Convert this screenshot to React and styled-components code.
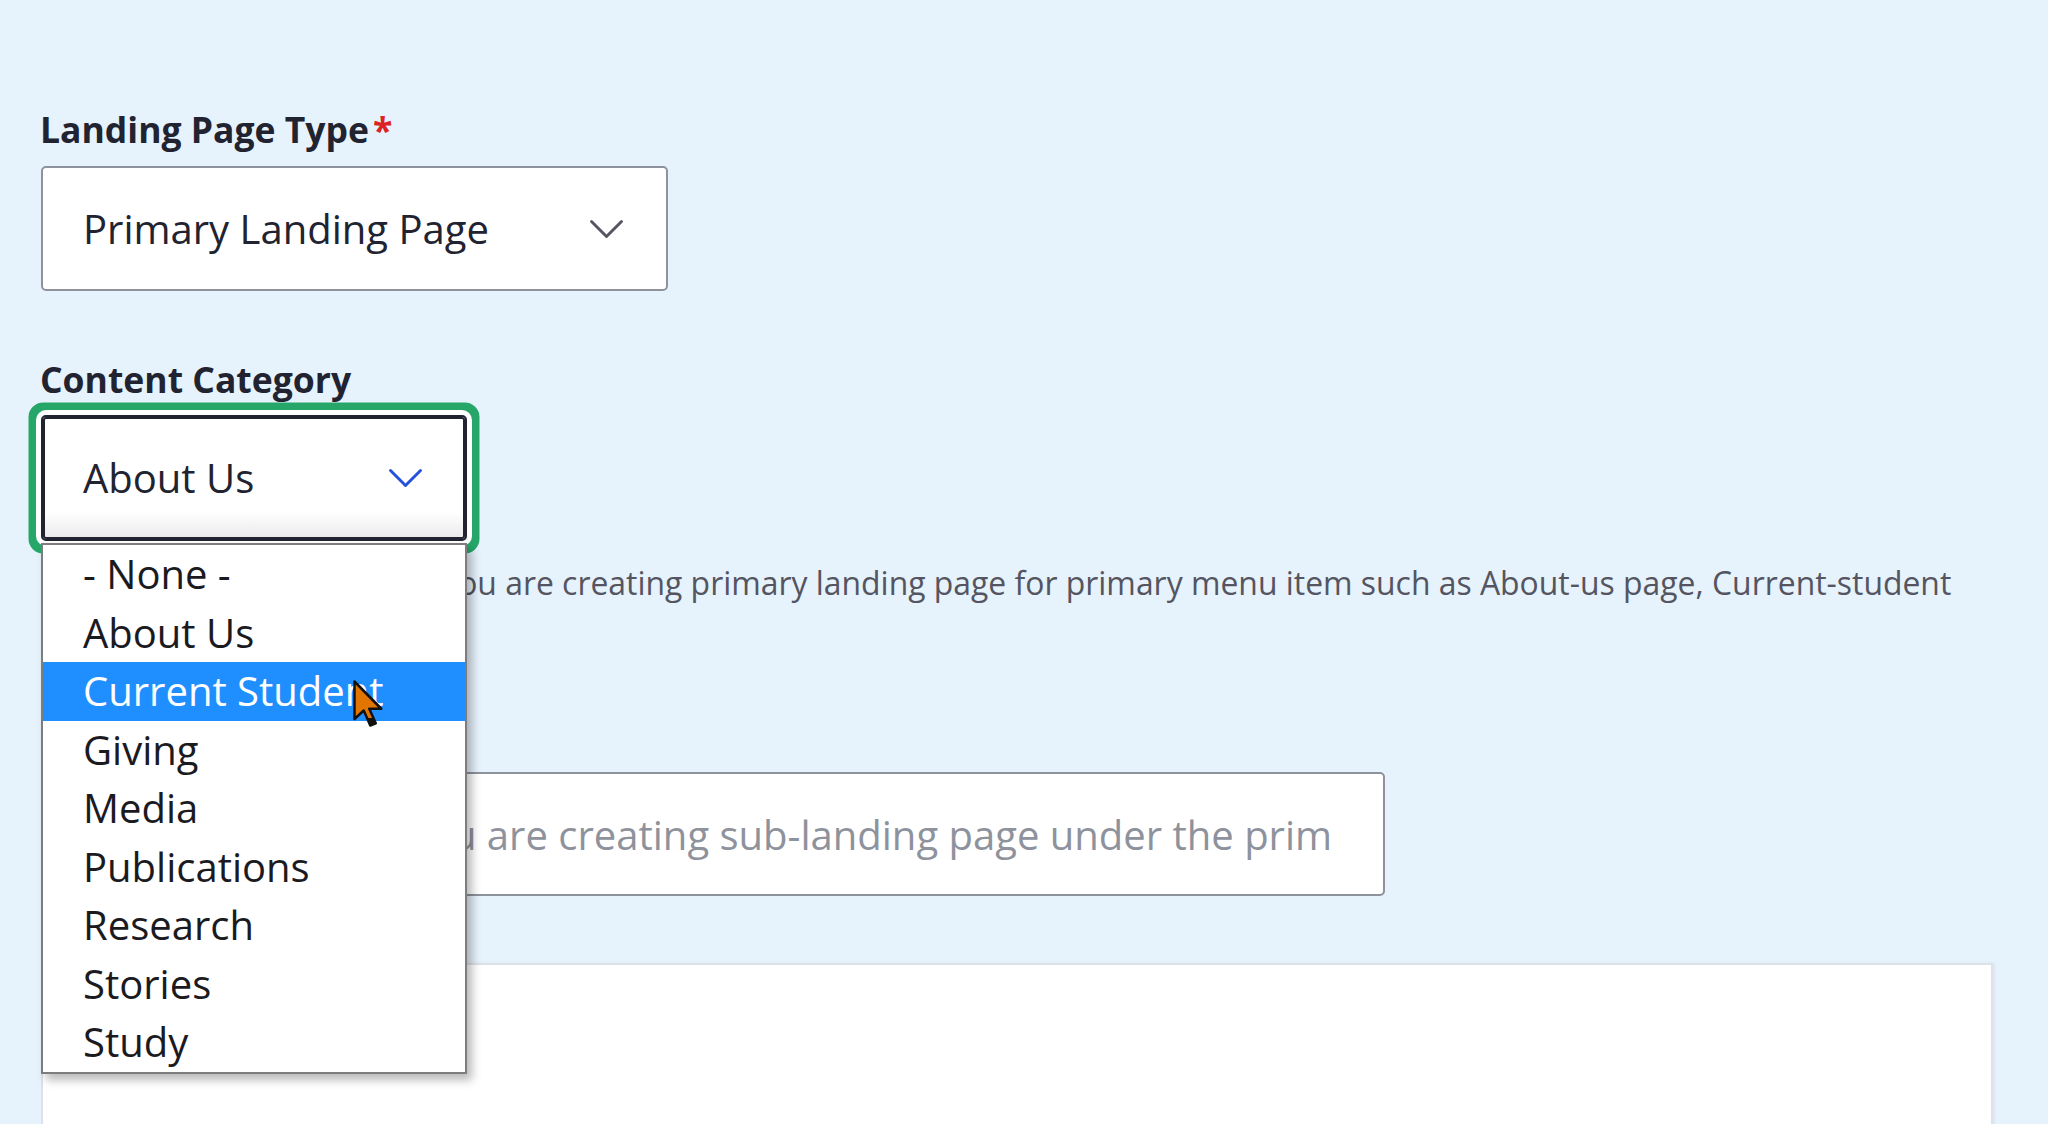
import React from 'react';
import styled, { createGlobalStyle } from 'styled-components';

const GlobalStyle = createGlobalStyle`
  html, body {
    margin: 0;
    padding: 0;
    background: #e6f2fc;
    overflow: hidden;
  }
  body {
    font-family: 'Open Sans', 'Noto Sans', sans-serif;
    color: #222330;
  }
`;

const Page = styled.main`
  box-sizing: border-box;
  height: 1124px;
  padding: 107px 0 0 41px;
  overflow: hidden;
`;

const FormItem = styled.div`
  position: relative;
  margin-top: ${(p) => p.$gap || 0}px;
`;

const Label = styled.label`
  display: block;
  margin: 0 0 ${(p) => p.$after || 14}px -1px;
  font-size: 35.5px;
  line-height: 45px;
  font-weight: 700;
  color: #222330;
`;

const Required = styled.span`
  margin-left: 4px;
  color: #dc2323;
`;

const SelectBox = styled.div`
  box-sizing: border-box;
  display: flex;
  align-items: center;
  justify-content: space-between;
  width: ${(p) => p.$width}px;
  height: ${(p) => p.$height || 125}px;
  padding: 0 42px 0 40px;
  border: 2px solid ${(p) => (p.$focused ? '#222330' : '#8e929c')};
  border-radius: 5px;
  background: ${(p) =>
    p.$focused ? 'linear-gradient(to bottom, #fff 78%, #e9e9ec 100%)' : '#fff'};
  box-shadow: ${(p) =>
    p.$focused
      ? 'inset 0 0 0 2px #222330, 0 0 0 5px #fff, 0 0 0 12.5px #26a769'
      : 'none'};
  font-size: 40px;
  line-height: 60px;
  color: #222330;
`;

const Chevron = ({ color }) => (
  <svg width="35" height="20" viewBox="0 0 14 8" fill="none">
    <path
      d="M1 1 L7 7 L13 1"
      stroke={color}
      strokeWidth="1.15"
      strokeLinecap="round"
      strokeLinejoin="round"
    />
  </svg>
);

const Dropdown = styled.ul`
  position: absolute;
  z-index: 5;
  top: 186px;
  left: 0;
  box-sizing: border-box;
  width: 426px;
  margin: 0;
  padding: 0;
  list-style: none;
  background: #fff;
  border: 2px solid #7d7d7d;
  box-shadow: 5px 6px 9px rgba(0, 0, 0, 0.28);
`;

const Option = styled.li`
  height: 58.5px;
  padding-left: 40px;
  font-size: 40px;
  line-height: 58.5px;
  white-space: nowrap;
  color: ${(p) => (p.$active ? '#fff' : '#1b1b1f')};
  background: ${(p) => (p.$active ? '#1f8fff' : 'transparent')};
`;

const Cursor = styled.svg`
  position: absolute;
  left: 310px;
  top: 135px;
`;

const Description = styled.div`
  margin-top: 19px;
  font-size: 31.9px;
  line-height: 45px;
  white-space: nowrap;
  color: #545560;
`;

const TextInput = styled.input`
  box-sizing: border-box;
  display: block;
  width: 1344px;
  height: 124px;
  padding: 0 53px 0 40px;
  border: 2px solid #8e929c;
  border-radius: 5px;
  background: #fff;
  font-family: inherit;
  font-size: 40px;
  color: #222330;
  outline: none;

  &::placeholder {
    color: #8e929c;
    opacity: 1;
  }
`;

const EditorBox = styled.div`
  box-sizing: border-box;
  width: 1952px;
  height: 240px;
  margin-top: 67px;
  background: #fff;
  border: 2px solid #dde2e8;
  border-bottom: none;
  box-shadow: 2px 0 3px rgba(0, 0, 0, 0.05);
`;

const categories = [
  '- None -',
  'About Us',
  'Current Student',
  'Giving',
  'Media',
  'Publications',
  'Research',
  'Stories',
  'Study',
];

export default function App() {
  return (
    <>
      <GlobalStyle />
      <Page>
        <FormItem>
          <Label>
            Landing Page Type<Required>*</Required>
          </Label>
          <SelectBox $width={627}>
            <span>Primary Landing Page</span>
            <Chevron color="#545560" />
          </SelectBox>
        </FormItem>

        <FormItem $gap={66}>
          <Label $after={13}>Content Category</Label>
          <SelectBox $width={426} $height={126} $focused>
            <span>About Us</span>
            <Chevron color="#2451dc" />
          </SelectBox>
          <Dropdown>
            {categories.map((c) => (
              <Option key={c} $active={c === 'Current Student'}>
                {c}
              </Option>
            ))}
            <Cursor width="30" height="48" viewBox="0 0 12 19.2">
              <defs>
                <linearGradient id="cur" x1="0" y1="0" x2="0" y2="19.2" gradientUnits="userSpaceOnUse">
                  <stop offset="0.8" stopColor="#e27400" />
                  <stop offset="0.8" stopColor="#111" />
                </linearGradient>
              </defs>
              <path
                d="M0.6 0.6 V15.6 L4.3 12.2 L6.9 18.2 L9.1 17.3 L6.5 11.5 H11.3 Z"
                fill="url(#cur)"
                stroke="#111"
                strokeWidth="1"
                strokeLinejoin="round"
              />
            </Cursor>
          </Dropdown>
          <Description>
            Please, select this option if you are creating primary landing page for primary menu item such as About-us page, Current-student
            <br />
            page.
          </Description>
        </FormItem>

        <FormItem $gap={63}>
          <Label>Sub Landing Page</Label>
          <TextInput placeholder="Select this one, if you are creating sub-landing page under the primary landing page" />
        </FormItem>

        <EditorBox />
      </Page>
    </>
  );
}
